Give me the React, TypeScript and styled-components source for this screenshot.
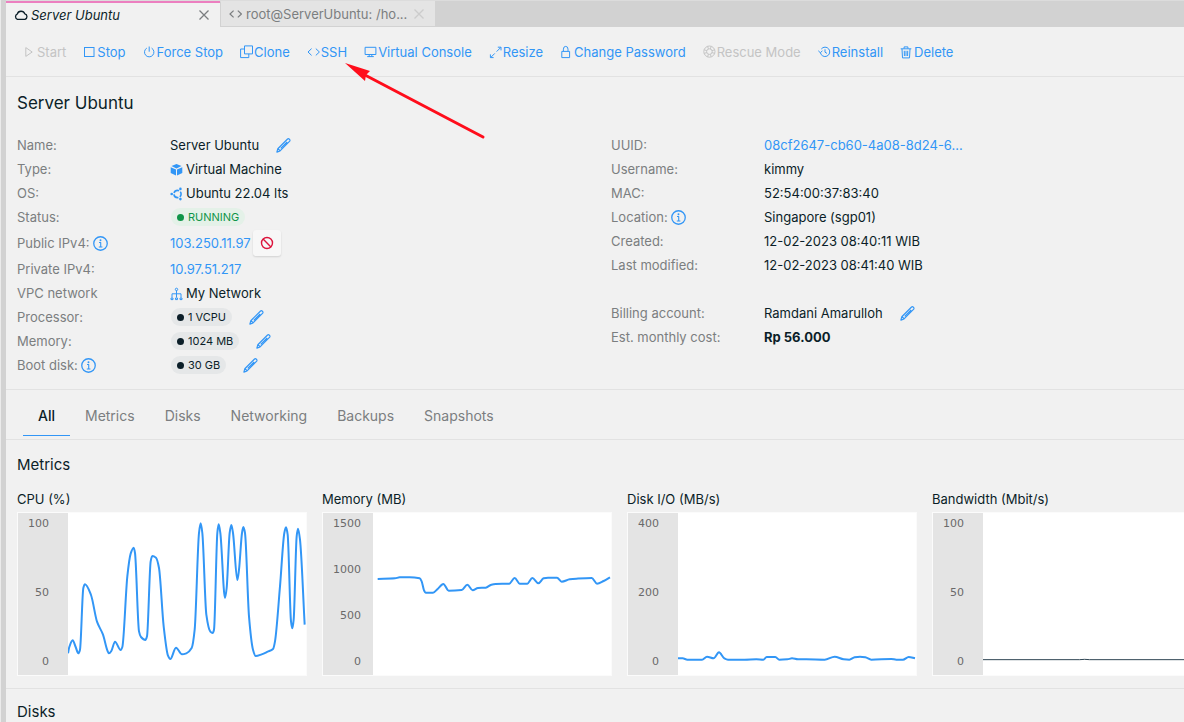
import React from "react";
import styled, { createGlobalStyle } from "styled-components";

const blue = "#3296f6";
const ink = "#0b1e28";
const muted = "#7b7e80";
const line = "#e2e2e2";

const GlobalStyle = createGlobalStyle`
  * { box-sizing: border-box; }
  body {
    margin: 0;
    background: #f1f1f1;
    color: ${ink};
    font: 13px/24px Inter, "Liberation Sans", sans-serif;
  }
  button { font: inherit; color: inherit; background: none; border: 0; padding: 0; cursor: pointer; }
  h1, h2, h3, dl, dd { margin: 0; font-weight: 400; }
  a { color: ${blue}; text-decoration: none; }
`;

const Page = styled.div`
  position: relative;
  min-height: 100vh;
  display: flex;
  overflow: hidden;
`;
const Rail = styled.div`
  flex: none;
  width: 6px;
  background: #d2d2d2;
  border-left: 1px solid #ebebeb;
`;
const Main = styled.main`
  flex: 1;
  min-width: 0;
`;
const TabStrip = styled.div`
  display: flex;
  height: 27px;
  background: #d2d2d2;
  border-top: 1px solid #dcdcdc;
`;
const WindowTab = styled.div<{ $active?: boolean }>`
  display: flex;
  align-items: center;
  gap: 3px;
  width: ${(p) => (p.$active ? 214 : 215)}px;
  padding: 0 9px 0 8px;
  background: ${(p) => (p.$active ? "#f1f1f1" : "#e4e4e4")};
  color: ${(p) => (p.$active ? ink : muted)};
  font-style: ${(p) => (p.$active ? "italic" : "normal")};
  border-top: ${(p) => (p.$active ? "2px solid #ec7fc0" : "1px solid #e4e4e4")};
  border-left: ${(p) => (p.$active ? "0" : "1px solid #d2d2d2")};
  border-bottom: ${(p) => (p.$active ? "0" : "1px solid #d2d2d2")};
`;
const WindowLabel = styled.span`
  flex: 1;
  white-space: nowrap;
`;
const CloseButton = styled.button<{ $dim?: boolean }>`
  display: flex;
  color: ${(p) => (p.$dim ? "#cccccc" : "#7b7e80")};
`;
const Toolbar = styled.div`
  display: flex;
  align-items: center;
  gap: 17px;
  height: 50px;
  padding: 0 17px;
  border-bottom: 1px solid ${line};
`;
const Action = styled.button`
  display: flex;
  align-items: center;
  flex: none;
  color: ${blue};
  white-space: nowrap;
  &:disabled { color: #c4c4c4; cursor: default; }
`;
const Summary = styled.section`
  padding: 14px 0 12px 11px;
  border-bottom: 1px solid ${line};
`;
const Title = styled.h1`
  font-size: 17px;
  line-height: 24px;
  margin-bottom: 18px;
`;
const Columns = styled.div`
  display: grid;
  grid-template-columns: 1fr 1fr;
  gap: 21px;
`;
const InfoRow = styled.div<{ $tall?: boolean; $spaced?: boolean }>`
  display: flex;
  align-items: center;
  height: ${(p) => (p.$tall ? 28 : 24)}px;
  margin-top: ${(p) => (p.$spaced ? 24 : 0)}px;
`;
const Term = styled.dt`
  display: flex;
  align-items: center;
  gap: 3px;
  width: 153px;
  color: ${muted};
`;
const Value = styled.dd<{ $bold?: boolean }>`
  display: flex;
  align-items: center;
  white-space: nowrap;
  font-weight: ${(p) => (p.$bold ? 700 : 400)};
`;
const EditButton = styled.button`
  display: flex;
  margin-left: 17px;
  color: ${blue};
`;
const BlockButton = styled.button`
  display: flex;
  align-items: center;
  justify-content: center;
  width: 28px;
  height: 26px;
  margin-left: 2px;
  color: #dc143c;
  background: #f7f7f7;
  border-radius: 3px;
  box-shadow: 0 1px 2px #00000022;
`;
const InfoButton = styled.button`
  display: flex;
  color: ${blue};
`;
const Pill = styled.span<{ $running?: boolean }>`
  display: flex;
  align-items: center;
  gap: 4px;
  height: 18px;
  margin-left: 1px;
  padding: 0 6px;
  border-radius: 9px;
  font-size: 11px;
  line-height: 18px;
  color: ${(p) => (p.$running ? "#0f9548" : ink)};
  background: ${(p) => (p.$running ? "#e4f1e8" : "#e5e7e8")};
  &::before {
    content: "";
    width: 7px;
    height: 7px;
    border-radius: 50%;
    background: currentColor;
  }
`;
const SectionNav = styled.nav`
  display: flex;
  height: 50px;
  padding: 0 17px 3px;
  border-bottom: 1px solid ${line};
`;
const SectionTab = styled.button<{ $active?: boolean }>`
  padding: 0 15px;
  margin-top: 6px;
  font-size: 14px;
  font-weight: ${(p) => (p.$active ? 500 : 400)};
  color: ${(p) => (p.$active ? ink : muted)};
  border-bottom: 1px solid ${(p) => (p.$active ? blue : "transparent")};
`;
const Section = styled.section`
  padding: 13px 0 12px 11px;
  border-bottom: 1px solid ${line};
  &:last-child { padding-bottom: 0; border-bottom: 0; }
`;
const SectionTitle = styled.h2`
  font-size: 15px;
  line-height: 24px;
  &:last-child { line-height: 20px; }
`;
const ChartGrid = styled.div`
  display: grid;
  grid-template-columns: repeat(4, minmax(290px, 1fr));
  gap: 15px;
  margin-top: 10px;
`;
const ChartTitle = styled.h3`
  font-size: 13px;
  line-height: 24px;
`;
const ChartBox = styled.div`
  display: flex;
  height: 164px;
  margin-top: 1px;
  background: #ffffff;
  border: 1px solid #fbfbfb;
`;
const Axis = styled.div<{ $wide?: boolean }>`
  flex: none;
  display: flex;
  flex-direction: column;
  justify-content: space-between;
  width: 50px;
  padding: 3px ${(p) => (p.$wide ? 12 : 19)}px 5px 0;
  background: #e4e4e4;
  color: #6a6a6a;
  font: 11px/16px "DejaVu Sans", sans-serif;
  text-align: right;
`;
const Plot = styled.svg`
  flex: 1;
  min-width: 0;
  height: 100%;
`;
const Pointer = styled.svg`
  position: absolute;
  left: 344px;
  top: 62px;
  pointer-events: none;
`;

type IconProps = { children: React.ReactNode; size?: number; w?: number };
const Icon = ({ children, size = 14, w = 1 }: IconProps) => (
  <svg
    width={size}
    height={size}
    viewBox="0 0 14 14"
    fill="none"
    stroke="currentColor"
    strokeWidth={w}
    strokeLinejoin="round"
    aria-hidden="true"
  >
    {children}
  </svg>
);

const code = <path d="M4.6 3.6L1 7l3.6 3.4M8.8 3.6L12.4 7l-3.6 3.4" />;

const actions: { label: string; disabled?: boolean; icon: React.ReactNode }[] = [
  { label: "Start", disabled: true, icon: <path d="M2.8 2.6v8.8L9.2 7z" /> },
  { label: "Stop", icon: <rect x="1.5" y="2.5" width="9.5" height="9" strokeLinejoin="miter" /> },
  { label: "Force Stop", icon: <path d="M6.2 1.5v5.2M3.8 3.1a4.7 4.7 0 1 0 4.8 0" /> },
  {
    label: "Clone",
    icon: <path d="M4.5 .9h8v8h-8zM4.5 4H.6v8.6h8.2V8.9" strokeLinejoin="miter" />,
  },
  { label: "SSH", icon: code },
  {
    label: "Virtual Console",
    icon: <path d="M1.1 2.3h10.8v7.2H1.1zM3.2 11.6h6.6M5.2 9.5v2M7.8 9.5v2" />,
  },
  {
    label: "Resize",
    icon: (
      <path d="M8.8 2.2h3.2v3.2M11.8 2.4L7.6 6.6M5.8 8.4l-4 4M4.6 12.6H1.4V9.4" />
    ),
  },
  { label: "Change Password", icon: <path d="M1.8 6.4h7.8v6.2H1.8zM3.4 6.2V4.2a2.3 2.8 0 0 1 4.6 0v2" /> },
  {
    label: "Rescue Mode",
    disabled: true,
    icon: (
      <>
        <circle cx="6.4" cy="6.6" r="5.6" />
        <circle cx="6.4" cy="6.6" r="2.8" />
        <path d="M4.6 1.4l.8 2.5M8.2 1.4l-.8 2.5M4.6 11.8l.8-2.5M8.2 11.8l-.8-2.5M1.2 4.8l2.6.8M1.2 8.4l2.6-.8M11.6 4.8L9 5.6M11.6 8.4L9 7.6" />
      </>
    ),
  },
  {
    label: "Reinstall",
    icon: <path d="M2.4 7.6A4.7 4.7 0 1 0 3.3 4M.3 5.8l2.1 2 2-2.1M7 4.3v2.9l2 1.2" />,
  },
  {
    label: "Delete",
    icon: <path d="M.7 3.8h10.6M4.1 3.6V1.9h3.8v1.7M2 4l.5 8.9h7L10 4M4.3 5.8l.1 5.2M6 5.8V11M7.7 5.8L7.6 11" />,
  },
];

const Close = ({ dim, name }: { dim?: boolean; name: string }) => (
  <CloseButton $dim={dim} aria-label={`Close ${name}`}>
    <Icon w={1.3}>
      <path d="M2.5 2.5l9 9M11.5 2.5l-9 9" />
    </Icon>
  </CloseButton>
);

const Edit = ({ name }: { name: string }) => (
  <EditButton aria-label={`Edit ${name}`}>
    <Icon size={15}>
      <path d="M.8 13.2l.9-3.2L10.8.9q.8-.6 1.7.3t.3 1.7L3.8 12zM1.9 9.9l1.9 1.9M4.4 9.7l6-6" strokeWidth="1.1" />
    </Icon>
  </EditButton>
);

const Info = ({ name }: { name: string }) => (
  <InfoButton aria-label={`About ${name}`}>
    <Icon size={15}>
      <circle cx="7" cy="7" r="6.3" strokeWidth="1.2" />
      <path d="M5.6 6h1.6v4M5.4 10.2h3.4" />
      <circle cx="7" cy="3.9" r=".9" fill="currentColor" stroke="none" />
    </Icon>
  </InfoButton>
);

const Tinted = styled.span`
  display: flex;
  width: 16px;
  padding-top: 2px;
  color: ${blue};
`;

type RowProps = {
  term: string;
  info?: boolean;
  tall?: boolean;
  spaced?: boolean;
  bold?: boolean;
  children: React.ReactNode;
};
const Row = ({ term, info, tall, spaced, bold, children }: RowProps) => (
  <InfoRow $tall={tall} $spaced={spaced}>
    <Term>
      {term}
      {info && <Info name={term.replace(":", "")} />}
    </Term>
    <Value $bold={bold}>{children}</Value>
  </InfoRow>
);

type Point = [number, number];

/* Monotone cubic interpolation: no overshoot between samples. */
function smooth(points: Point[]): string {
  const n = points.length;
  const slope = points.slice(1).map((p, i) => (p[1] - points[i][1]) / (p[0] - points[i][0]));
  const tangent = points.map((_, i) => {
    if (i === 0) return slope[0];
    if (i === n - 1) return slope[n - 2];
    const a = slope[i - 1];
    const b = slope[i];
    return a * b <= 0 ? 0 : (2 * a * b) / (a + b);
  });
  let d = `M${points[0][0]} ${points[0][1]}`;
  for (let i = 1; i < n; i++) {
    const [x0, y0] = points[i - 1];
    const [x1, y1] = points[i];
    const h = (x1 - x0) / 3;
    d += `C${x0 + h} ${y0 + h * tangent[i - 1]} ${x1 - h} ${y1 - h * tangent[i]} ${x1} ${y1}`;
  }
  return d;
}

const cpu: Point[] = [
  [0, 421], [4, 402], [14, 382], [23, 402], [31, 421], [36, 410], [46, 225], [51, 214], [69, 246],
  [87, 326], [105, 365], [118, 412], [123, 421], [130, 414], [141, 386], [158, 411], [163, 402], [178, 190],
  [188, 122], [197, 104], [201, 120], [213, 355], [219, 372], [232, 381], [237, 370], [248, 145],
  [253, 129], [264, 134], [273, 165], [287, 340], [300, 428], [307, 438], [324, 404], [342, 424],
  [355, 421], [371, 405], [380, 350], [393, 60], [398, 31], [403, 60], [415, 305], [427, 356],
  [434, 360], [438, 350], [448, 60], [452, 34], [457, 60], [471, 255], [476, 225], [485, 60],
  [490, 36], [495, 60], [508, 201], [513, 170], [522, 60], [526, 42], [531, 60], [543, 310], [555, 410],
  [563, 429], [581, 424], [599, 416], [615, 408], [621, 385], [636, 220], [649, 60], [654, 43],
  [659, 65], [669, 325], [673, 346], [677, 320], [686, 70], [690, 47], [696, 80], [710, 335],
];
const memory: Point[] = [
  [14, 198], [66, 196], [80, 193], [110, 193], [140, 196], [146, 205], [153, 232], [158, 239],
  [180, 239], [194, 228], [211, 213], [227, 233], [266, 231], [283, 215], [299, 232], [315, 225],
  [338, 224], [355, 215], [368, 213], [409, 212], [425, 195], [440, 212], [463, 212], [478, 195],
  [496, 211], [512, 196], [525, 194], [552, 194], [566, 206], [590, 199], [610, 197], [656, 195],
  [672, 212], [692, 204], [711, 193],
];
const disk: Point[] = [
  [0, 436], [14, 436], [28, 440], [72, 440], [87, 431], [107, 436], [123, 418], [139, 436],
  [150, 440], [200, 440], [235, 439], [256, 440], [266, 432], [292, 432], [304, 440], [328, 439],
  [342, 436], [360, 439], [385, 439], [440, 440], [470, 431], [497, 439], [514, 440], [530, 433],
  [546, 431], [562, 433], [580, 440], [640, 438], [655, 440], [675, 440], [692, 432], [711, 436],
];

const charts: { title: string; ticks: string[]; points: Point[]; dark?: boolean }[] = [
  { title: "CPU (%)", ticks: ["100", "50", "0"], points: cpu },
  { title: "Memory (MB)", ticks: ["1500", "1000", "500", "0"], points: memory },
  { title: "Disk I/O (MB/s)", ticks: ["400", "200", "0"], points: disk },
  { title: "Bandwidth (Mbit/s)", ticks: ["100", "50", "0"], points: [[0, 440], [290, 440], [305, 439], [320, 440], [714, 440]], dark: true },
];

export default function App() {
  return (
    <Page>
      <GlobalStyle />
      <Rail />
      <Main>
        <TabStrip>
          <WindowTab $active>
            <Icon w={1.3}>
              <path d="M3.4 11.3a2.8 2.8 0 0 1-.2-5.2 4 4 0 0 1 7.6-.2 2.8 2.8 0 0 1 .2 5.4z" />
            </Icon>
            <WindowLabel>Server Ubuntu</WindowLabel>
            <Close name="Server Ubuntu" />
          </WindowTab>
          <WindowTab>
            <Icon w={1.2}>{code}</Icon>
            <WindowLabel>root@ServerUbuntu: /ho...</WindowLabel>
            <Close dim name="terminal" />
          </WindowTab>
        </TabStrip>
        <Toolbar>
          {actions.map((a) => (
            <Action key={a.label} disabled={a.disabled}>
              <Icon>{a.icon}</Icon>
              {a.label}
            </Action>
          ))}
        </Toolbar>
        <Summary>
          <Title>Server Ubuntu</Title>
          <Columns>
            <dl>
              <Row term="Name:">
                Server Ubuntu
                <Edit name="name" />
              </Row>
              <Row term="Type:">
                <Tinted>
                  <Icon>
                    <path d="M6.5.9l5 2.2-5 2.3-5-2.3zM.7 4.2L6 6.6v6L.7 10.1zM12.3 4.2L7 6.6v6l5.3-2.5z" fill="currentColor" stroke="none" />
                  </Icon>
                </Tinted>
                Virtual Machine
              </Row>
              <Row term="OS:">
                <Tinted>
                  <Icon w={1.6}>
                    <circle cx="7.5" cy="7" r="3.6" strokeDasharray="6.1 1.44" strokeDashoffset="-4.5" />
                    <circle cx="1.7" cy="7" r="1.3" fill="currentColor" stroke="none" />
                    <circle cx="10.4" cy="1.9" r="1.3" fill="currentColor" stroke="none" />
                    <circle cx="10.4" cy="12.1" r="1.3" fill="currentColor" stroke="none" />
                  </Icon>
                </Tinted>
                Ubuntu 22.04 lts
              </Row>
              <Row term="Status:">
                <Pill $running>RUNNING</Pill>
              </Row>
              <Row term="Public IPv4:" info tall>
                <a href="#public-ip">103.250.11.97</a>
                <BlockButton aria-label="Release address">
                  <Icon w={1.4}>
                    <circle cx="7" cy="7" r="5.5" />
                    <path d="M3.1 3.1l7.8 7.8" />
                  </Icon>
                </BlockButton>
              </Row>
              <Row term="Private IPv4:">
                <a href="#private-ip">10.97.51.217</a>
              </Row>
              <Row term="VPC network">
                <Tinted>
                  <Icon>
                    <path d="M6.5 3.5v7M2 10.5V6.8h9v3.7" />
                    <circle cx="6.5" cy="2.4" r="1.2" />
                    <path d="M1 11h2v1.6H1zM5.5 11h2v1.6h-2zM10 11h2v1.6h-2z" />
                  </Icon>
                </Tinted>
                My Network
              </Row>
              <Row term="Processor:">
                <Pill>1 VCPU</Pill>
                <Edit name="processor" />
              </Row>
              <Row term="Memory:">
                <Pill>1024 MB</Pill>
                <Edit name="memory" />
              </Row>
              <Row term="Boot disk:" info>
                <Pill>30 GB</Pill>
                <Edit name="boot disk" />
              </Row>
            </dl>
            <dl>
              <Row term="UUID:">
                <a href="#uuid">08cf2647-cb60-4a08-8d24-6...</a>
              </Row>
              <Row term="Username:">kimmy</Row>
              <Row term="MAC:">52:54:00:37:83:40</Row>
              <Row term="Location:" info>Singapore (sgp01)</Row>
              <Row term="Created:">12-02-2023 08:40:11 WIB</Row>
              <Row term="Last modified:">12-02-2023 08:41:40 WIB</Row>
              <Row term="Billing account:" spaced>
                Ramdani Amarulloh
                <Edit name="billing account" />
              </Row>
              <Row term="Est. monthly cost:" bold>Rp 56.000</Row>
            </dl>
          </Columns>
        </Summary>
        <SectionNav>
          {["All", "Metrics", "Disks", "Networking", "Backups", "Snapshots"].map((t, i) => (
            <SectionTab key={t} $active={i === 0}>{t}</SectionTab>
          ))}
        </SectionNav>
        <Section>
          <SectionTitle>Metrics</SectionTitle>
          <ChartGrid>
            {charts.map((c) => (
              <div key={c.title}>
                <ChartTitle>{c.title}</ChartTitle>
                <ChartBox>
                  <Axis $wide={c.ticks.length > 3}>
                    {c.ticks.map((t) => <span key={t}>{t}</span>)}
                  </Axis>
                  <Plot viewBox="0 0 714 486" preserveAspectRatio="none" role="img" aria-label={c.title}>
                    <path
                      d={smooth(c.points)}
                      fill="none"
                      stroke={c.dark ? "#2f4554" : blue}
                      strokeWidth={c.dark ? 1 : 2}
                      strokeLinejoin="round"
                      vectorEffect="non-scaling-stroke"
                    />
                  </Plot>
                </ChartBox>
              </div>
            ))}
          </ChartGrid>
        </Section>
        <Section>
          <SectionTitle>Disks</SectionTitle>
        </Section>
      </Main>
      <Pointer width="142" height="78" viewBox="0 0 142 78" aria-hidden="true">
        <path d="M20 12.5L139 75" stroke="#ff0d1b" strokeWidth="3" strokeLinecap="round" />
        <path d="M1 1l25 8-4 4-1 6z" fill="#ff0d1b" />
      </Pointer>
    </Page>
  );
}
